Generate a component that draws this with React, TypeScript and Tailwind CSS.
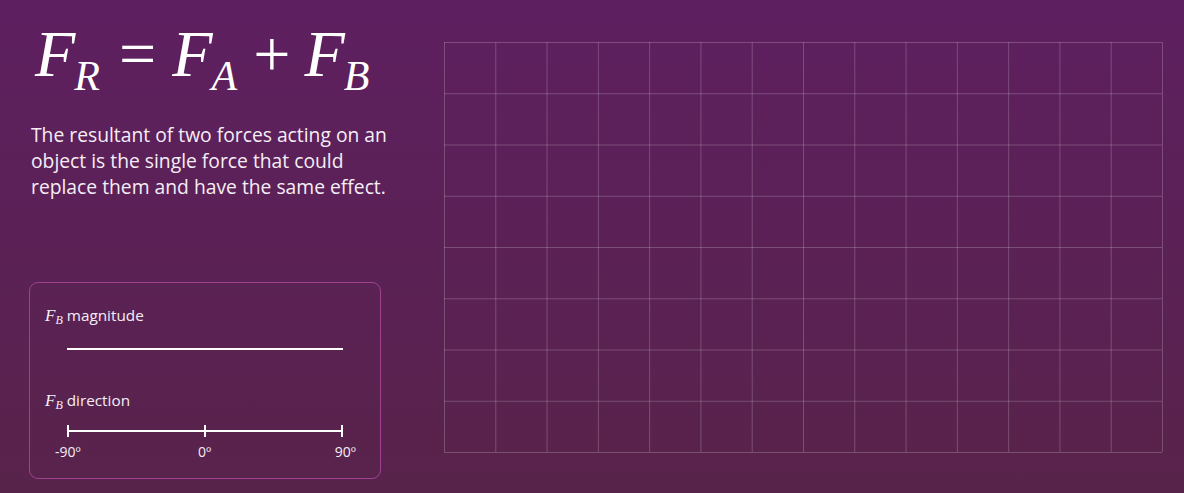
import React from "react";

const COLS = 14;
const ROWS = 8;
const CELL_W = 718 / COLS;
const CELL_H = 410 / ROWS;

function Grid() {
  const lines: React.ReactNode[] = [];
  for (let i = 0; i <= COLS; i++) {
    const x = 0.5 + i * CELL_W;
    lines.push(<line key={`v${i}`} x1={x} y1={0} x2={x} y2={410} />);
  }
  for (let j = 0; j <= ROWS; j++) {
    const y = 0.5 + j * CELL_H;
    lines.push(<line key={`h${j}`} x1={0} y1={y} x2={718} y2={y} />);
  }
  return (
    <svg width={719} height={411} className="block" stroke="rgba(255,255,255,0.2)" strokeWidth={1}>
      {lines}
    </svg>
  );
}

function FB() {
  return (
    <span className="font-['Liberation_Serif',serif] italic text-[17px] leading-none">
      F<sub className="relative top-[3px] align-baseline text-[12px]">B</sub>
    </span>
  );
}

function Track() {
  return (
    <div className="relative mx-[37px] h-[12px]">
      <div className="absolute left-0 right-0 top-[5px] h-[2px] bg-white" />
      <div className="absolute left-0 top-0 h-[12px] w-[2px] bg-white" />
      <div className="absolute left-1/2 top-0 h-[12px] w-[2px] -translate-x-1/2 bg-white" />
      <div className="absolute right-0 top-0 h-[12px] w-[2px] bg-white" />
    </div>
  );
}

export default function App() {
  return (
    <div className="flex h-[493px] w-[1184px] overflow-hidden bg-gradient-to-b from-[#5e1f60] to-[#58234b] font-['Open_Sans',sans-serif] text-[#f6eef6]">
      <div className="flex w-[444px] shrink-0 flex-col pl-[29px]">
        <div className="mt-[16px] flex items-baseline pl-[6px] font-['Liberation_Serif',serif] text-[66px] leading-[76px] text-white">
          <span className="italic">F</span>
          <span className="relative top-[14px] -ml-[1px] text-[42px] italic">R</span>
          <span className="ml-[19px]">=</span>
          <span className="ml-[16px] italic">F</span>
          <span className="relative top-[14px] -ml-[1px] text-[42px] italic">A</span>
          <span className="ml-[16px]">+</span>
          <span className="ml-[14px] italic">F</span>
          <span className="relative top-[14px] -ml-[1px] text-[42px] italic">B</span>
        </div>
        <p className="mt-[22px] whitespace-nowrap pl-[2px] text-[19.3px] leading-[26px]">
          The resultant of two forces acting on an
          <br />
          object is the single force that could
          <br />
          replace them and have the same effect.
        </p>
        <div className="mt-[82px] flex h-[197px] w-[352px] flex-col rounded-[9px] border border-[#a0428f] pt-[22px]">
          <div className="flex items-baseline gap-[4px] pl-[15px] text-[15.3px] leading-[20px]">
            <FB />
            <span>magnitude</span>
          </div>
          <div className="mt-[23px]">
            <div className="mx-[37px] h-[2px] bg-white" />
          </div>
          <div className="mt-[40px] flex items-baseline gap-[4px] pl-[15px] text-[15.3px] leading-[20px]">
            <FB />
            <span>direction</span>
          </div>
          <div className="mt-[15px]">
            <Track />
          </div>
          <div className="relative mx-[37px] mt-[6px] h-[18px] text-[14px] leading-[18px]">
            <span className="absolute left-0 -translate-x-[12px]">-90º</span>
            <span className="absolute left-1/2 -translate-x-[7px]">0º</span>
            <span className="absolute right-0 translate-x-[13px]">90º</span>
          </div>
        </div>
      </div>
      <div className="pt-[42px]">
        <Grid />
      </div>
    </div>
  );
}
